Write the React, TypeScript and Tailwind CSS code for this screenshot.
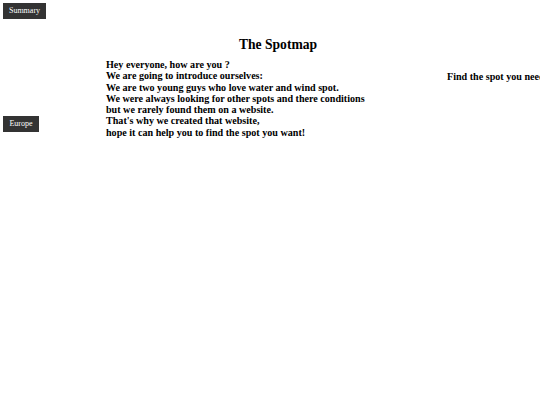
export default function App() {
  return (
    <div className="min-h-screen bg-white text-black font-['Liberation_Serif',_serif]">
      <div className="flex pl-[3px] pt-[3px]">
        <button className="h-4 w-[43px] bg-[#333333] text-[8px] leading-none text-white">Summary</button>
      </div>
      <h1 className="mt-[18px] pl-4 text-center text-[13.6px] font-bold leading-[16px]">The Spotmap</h1>
      <div className="flex whitespace-nowrap">
        <div className="flex w-[106px] shrink-0 items-start pl-[3px] pt-[63px]">
          <button className="h-4 w-9 bg-[#333333] text-[8px] leading-none text-white">Europe</button>
        </div>
        <p className="mt-[6px] w-[341px] shrink-0 text-[10.1px] font-bold leading-[11.3px]">
          Hey everyone, how are you ?<br />
          We are going to introduce ourselves:<br />
          We are two young guys who love water and wind spot.<br />
          We were always looking for other spots and there conditions<br />
          but we rarely found them on a website.<br />
          That's why we created that website,<br />
          hope it can help you to find the spot you want!
        </p>
        <p className="mt-[18px] text-[10.1px] font-bold leading-[11.3px]">Find the spot you need</p>
      </div>
    </div>
  );
}
